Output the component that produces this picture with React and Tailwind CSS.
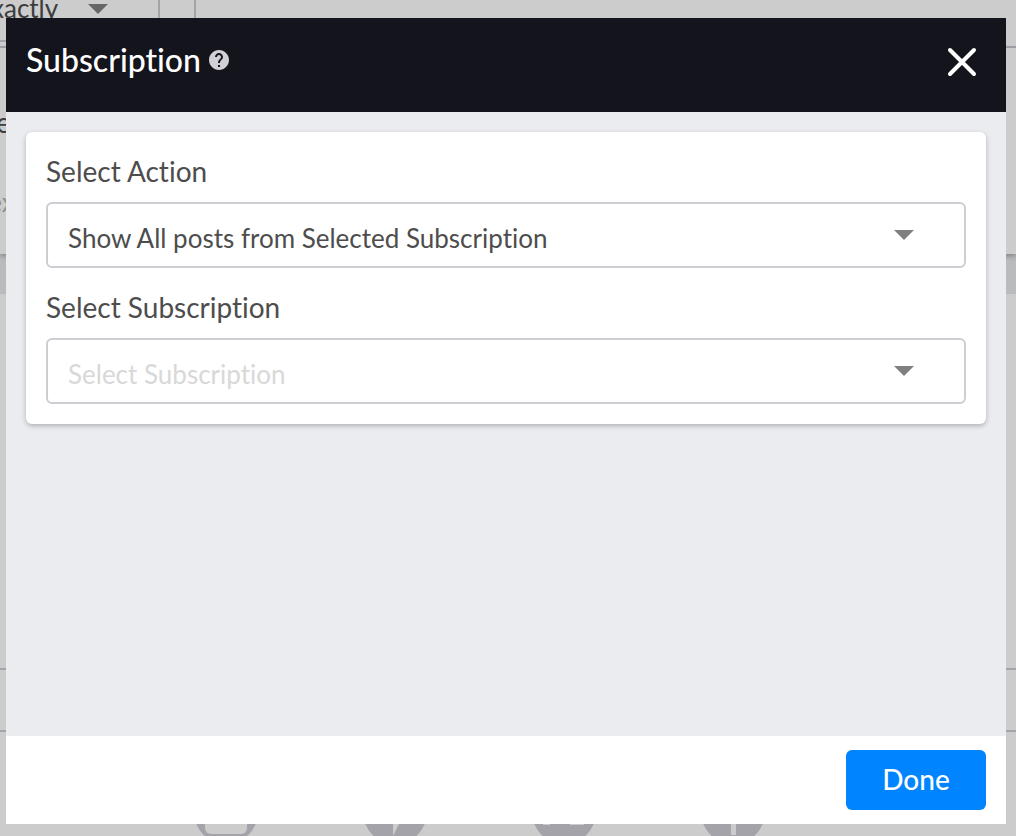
import { useState } from "react";

function Caret({ className }) {
  return (
    <svg className={className} width="20" height="10" viewBox="0 0 20 10" aria-hidden="true">
      <path d="M0 0h20L10 10z" fill="currentColor" />
    </svg>
  );
}

function SelectField({ id, label, value, onChange, options, placeholder }) {
  return (
    <div>
      <label htmlFor={id} className="block text-[28px] leading-[38px] text-[#4d4d4d]">
        {label}
      </label>
      <div className="relative mt-3">
        <select
          id={id}
          value={value}
          onChange={(e) => onChange(e.target.value)}
          className={
            "block h-[66px] w-full appearance-none rounded-md border-2 border-[#cdcdd3] bg-white pt-[6px] pr-20 pl-5 text-[26px] " +
            (value ? "text-[#4d4d4d]" : "text-[#d8d8d8]")
          }
        >
          {placeholder && <option value="">{placeholder}</option>}
          {options.map((o) => (
            <option key={o}>{o}</option>
          ))}
        </select>
        <Caret className="pointer-events-none absolute top-7 right-[52px] text-[#808080]" />
      </div>
    </div>
  );
}

function PageBehind() {
  return (
    <div className="flex min-h-screen flex-col overflow-hidden bg-[#cccccc] text-[#3d3d3d]" aria-hidden="true">
      <div className="flex h-12 border-b-2 border-[#a4a3a9]">
        <div className="flex h-[42px] w-40 justify-between border-r-2 border-b-2 border-[#a4a3a9]">
          <span className="-ml-6 -mt-3 text-[26px] leading-10">Exactly</span>
          <Caret className="mt-1 mr-[50px] text-[#666666]" />
        </div>
        <div className="mr-14 ml-[34px] h-[42px] flex-1 border-b-2 border-l-2 border-[#a4a3a9]" />
      </div>
      <div className="relative h-[206px] pt-[54px] shadow-[0_2px_5px_rgba(0,0,0,0.3)]">
        <p className="-ml-[62px] text-[28px] leading-10">Name</p>
        <p className="-ml-6 mt-10 text-[26px] leading-10 text-[#909090]">Text</p>
      </div>
      <div className="h-10 bg-[#babbbc]" />
      <div className="h-[374px]" />
      <div className="h-16 border-y-2 border-[#a4a3a9]" />
      <div className="flex h-[104px] items-start gap-[105px] overflow-hidden pt-12 pl-[194px] text-[#a4a3a9]">
        <svg className="shrink-0" width="64" height="64" viewBox="0 0 64 64">
          <circle cx="32" cy="32" r="32" fill="currentColor" />
          <rect x="11" y="14" width="42" height="40" rx="6" fill="#cccccc" />
        </svg>
        <svg className="shrink-0" width="64" height="64" viewBox="0 0 64 64">
          <circle cx="32" cy="32" r="32" fill="currentColor" />
          <path d="M30 20h18L30 56z" fill="#cccccc" />
        </svg>
        <svg className="shrink-0" width="64" height="64" viewBox="0 0 64 64">
          <circle cx="32" cy="32" r="32" fill="currentColor" />
          <path d="M11 44h7M38 44h14" stroke="#cccccc" strokeWidth="2" />
        </svg>
        <svg className="shrink-0" width="64" height="64" viewBox="0 0 64 64">
          <circle cx="32" cy="32" r="32" fill="currentColor" />
          <path d="M30 20h5v35h-5z" fill="#cccccc" />
        </svg>
      </div>
    </div>
  );
}

export default function App() {
  const [action, setAction] = useState("Show All posts from Selected Subscription");
  const [subscription, setSubscription] = useState("");
  return (
    <div className="relative font-['Lato',sans-serif] [font-variant-ligatures:none]">
      <PageBehind />
      <div className="absolute inset-0 flex pt-[18px] pr-[10px] pb-3 pl-[6px]">
        <section role="dialog" aria-labelledby="dialog-title" className="flex flex-1 flex-col bg-[#ebecf0]">
          <header className="flex h-[94px] items-start justify-between bg-[#14141d] px-5 pt-[22px] text-white">
            <div className="flex items-center gap-2">
              <h1 id="dialog-title" className="text-[32px] leading-10 font-medium">Subscription</h1>
              <button type="button" aria-label="Help">
                <svg width="20" height="20" viewBox="2 2 20 20">
                  <path
                    fill="#d2d0d7"
                    d="M12 2C6.48 2 2 6.48 2 12s4.48 10 10 10 10-4.48 10-10S17.52 2 12 2zm1 17h-2v-2h2v2zm2.07-7.75-.9.92C13.45 12.9 13 13.5 13 15h-2v-.5c0-1.1.45-2.1 1.17-2.83l1.24-1.26c.37-.36.59-.86.59-1.41 0-1.1-.9-2-2-2s-2 .9-2 2H8c0-2.21 1.79-4 4-4s4 1.79 4 4c0 .88-.36 1.68-.93 2.25z"
                  />
                </svg>
              </button>
            </div>
            <button type="button" aria-label="Close" className="mt-[2px] mr-1 p-1">
              <svg width="32" height="32" viewBox="0 0 32 32">
                <path d="M4 4l24 24M28 4L4 28" stroke="white" strokeWidth="4" strokeLinecap="round" />
              </svg>
            </button>
          </header>
          <div className="flex-1 p-5">
            <div className="flex flex-col gap-5 rounded-md bg-white p-5 shadow-[0_2px_5px_rgba(0,0,0,0.25)]">
              <SelectField
                id="action"
                label="Select Action"
                value={action}
                onChange={setAction}
                options={["Show All posts from Selected Subscription"]}
              />
              <SelectField
                id="subscription"
                label="Select Subscription"
                value={subscription}
                onChange={setSubscription}
                options={[]}
                placeholder="Select Subscription"
              />
            </div>
          </div>
          <footer className="flex h-[88px] items-center justify-end bg-white px-5">
            <button type="button" className="h-[60px] w-[140px] rounded-md bg-[#0084ff] pb-[2px] text-[28px] font-medium text-white">
              Done
            </button>
          </footer>
        </section>
      </div>
    </div>
  );
}
